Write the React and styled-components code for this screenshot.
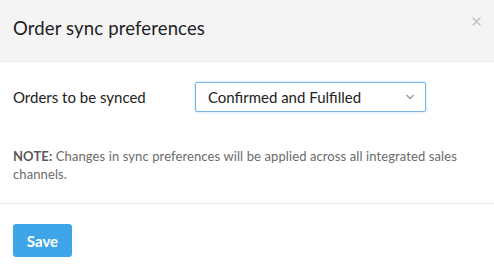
import styled, { createGlobalStyle } from 'styled-components';

const GlobalStyle = createGlobalStyle`
  html, body {
    margin: 0;
    padding: 0;
    background: #ffffff;
  }
  body {
    font-family: Lato, "Open Sans", "Liberation Sans", sans-serif;
    color: #212121;
  }
`;

const Modal = styled.div`
  width: 494px;
  min-height: 272px;
  background: #fff;
  display: flex;
  flex-direction: column;

  & > * {
    flex-shrink: 0;
  }
`;

const Header = styled.div`
  height: 62px;
  box-sizing: border-box;
  background: #f4f4f4;
  border-bottom: 1px solid #e9e9e9;
  display: flex;
  align-items: center;
  justify-content: space-between;
  padding: 0 12px 0 13px;
`;

const Title = styled.h4`
  margin: 0 0 6px;
  font-size: 18.5px;
  font-weight: 400;
  letter-spacing: 0.15px;
  color: #222;
`;

const Close = styled.button`
  align-self: flex-start;
  margin-top: 16px;
  border: 0;
  background: none;
  padding: 0;
  width: 11px;
  height: 11px;
  display: flex;
  align-items: center;
  justify-content: center;
  cursor: pointer;
`;

const Body = styled.div`
  padding: 20px 13px 0;
  border-bottom: 1px solid #e9e9e9;
  height: 142px;
  box-sizing: border-box;
`;

const Row = styled.div`
  display: flex;
  align-items: center;
`;

const Label = styled.label`
  width: 182px;
  font-size: 15px;
  color: #222;
`;

const Select = styled.div`
  width: 231px;
  height: 30px;
  box-sizing: border-box;
  border: 1px solid #74b5ea;
  border-radius: 2px;
  box-shadow: 0 0 3px rgba(80, 160, 230, 0.35);
  display: flex;
  align-items: center;
  justify-content: space-between;
  padding: 0 10px 0 12px;
  font-size: 15px;
  color: #222;
`;

const Note = styled.p`
  margin: 35px 0 0;
  font-size: 13px;
  line-height: 18px;
  letter-spacing: 0.1px;
  color: #6b6b6b;

  strong {
    font-weight: 700;
    color: #5a5a5a;
  }
`;

const Footer = styled.div`
  padding: 20px 13px;
`;

const SaveButton = styled.button`
  width: 59px;
  height: 33px;
  border: 0;
  border-radius: 3px;
  background: #3ea6e8;
  color: #fff;
  font-family: inherit;
  font-size: 15px;
  font-weight: 700;
  cursor: pointer;
`;

export default function App() {
  return (
    <>
      <GlobalStyle />
      <Modal>
        <Header>
          <Title>Order sync preferences</Title>
          <Close aria-label="Close">
            <svg width="9" height="9" viewBox="0 0 9 9">
              <path d="M1 1 L8 8 M8 1 L1 8" stroke="#c6c6c6" strokeWidth="1.6" strokeLinecap="round" />
            </svg>
          </Close>
        </Header>
        <Body>
          <Row>
            <Label>Orders to be synced</Label>
            <Select>
              <span>Confirmed and Fulfilled</span>
              <svg width="10" height="6" viewBox="0 0 10 6">
                <path d="M1.5 1 L5 4.5 L8.5 1" fill="none" stroke="#999" strokeWidth="1.3" />
              </svg>
            </Select>
          </Row>
          <Note>
            <strong>NOTE:</strong> Changes in sync preferences will be applied across all integrated sales channels.
          </Note>
        </Body>
        <Footer>
          <SaveButton>Save</SaveButton>
        </Footer>
      </Modal>
    </>
  );
}
